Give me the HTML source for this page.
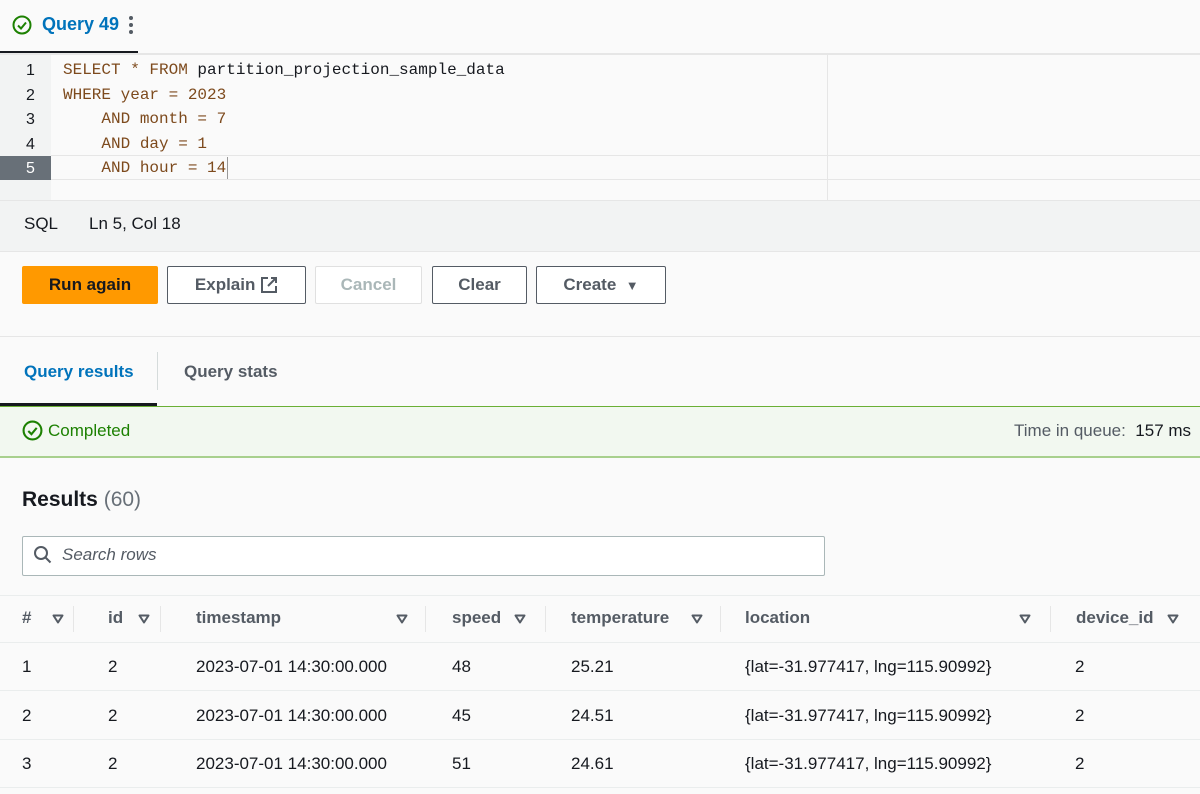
<!DOCTYPE html><html><head><style>
body{margin:0;width:1200px;height:794px;background:#fafafa;font-family:"Liberation Sans",sans-serif;position:relative;overflow:hidden;color:#16191f}
.a{position:absolute;white-space:nowrap}
.mono{font-family:"Liberation Mono",monospace;font-size:16px;color:#7d4a1d}
.btn{position:absolute;top:266px;height:38px;border:1px solid #545b64;border-radius:2px;background:#fff;font-weight:bold;font-size:17px;color:#545b64;display:flex;align-items:center;justify-content:center;box-sizing:border-box}
.th{position:absolute;top:608px;font-weight:bold;font-size:17px;color:#545b64}
.tri{position:absolute;top:614px}
.sep{position:absolute;top:606px;width:1px;height:26px;background:#e6e6e6}
.td{position:absolute;font-size:17px;color:#16191f}
.rl{position:absolute;left:0;width:1200px;height:1px;background:#eaeded}
</style></head><body>
<svg width="0" height="0" style="position:absolute"><defs><symbol id="t" viewBox="0 0 12 10"><path d="M1.5 1.5h9L6 8.5z" fill="none" stroke="#545b64" stroke-width="2" stroke-linejoin="round"/></symbol></defs></svg>
<svg class="a" style="left:12px;top:15px" width="20" height="20" viewBox="0 0 20 20"><circle cx="10" cy="10" r="8.5" fill="none" stroke="#1d8102" stroke-width="2"/><path d="M6 10.5l3 3 5-6" fill="none" stroke="#1d8102" stroke-width="2"/></svg>
<div class="a" style="left:42px;top:14px;font-size:18px;font-weight:bold;color:#0073bb">Query 49</div>
<div class="a" style="left:129px;top:16px;width:4px;height:22px;"><div style="width:4px;height:4px;border-radius:2px;background:#545b64;margin-bottom:3px"></div><div style="width:4px;height:4px;border-radius:2px;background:#545b64;margin-bottom:3px"></div><div style="width:4px;height:4px;border-radius:2px;background:#545b64"></div></div>
<div class="a" style="left:0;top:51px;width:138px;height:3px;background:#16191f"></div>
<div class="a" style="left:0;top:53px;width:1200px;height:2px;background:#e6e6e6"></div>
<div class="a" style="left:0;top:55px;width:51px;height:145px;background:#f2f3f3"></div>
<div class="a" style="left:0;top:156px;width:51px;height:24px;background:#687078"></div>
<div class="a" style="left:51px;top:155px;width:1149px;height:1px;background:#e6e6e6"></div>
<div class="a" style="left:51px;top:179px;width:1149px;height:1px;background:#e6e6e6"></div>
<div class="a" style="left:827px;top:55px;width:1px;height:145px;background:#e6e6e6"></div>
<div class="a" style="left:26px;top:59px;font-size:16px;line-height:24.5px;color:#16191f">1<br>2<br>3<br>4<br><span style="color:#fff">5</span></div>
<div class="a mono" style="left:63px;top:58px;line-height:24.5px">SELECT * FROM <span style="color:#16191f">partition_projection_sample_data</span><br>WHERE year = 2023<br>&nbsp;&nbsp;&nbsp;&nbsp;AND month = 7<br>&nbsp;&nbsp;&nbsp;&nbsp;AND day = 1<br>&nbsp;&nbsp;&nbsp;&nbsp;AND hour = 14</div>
<div class="a" style="left:227px;top:157px;width:1px;height:22px;background:#999"></div>
<div class="a" style="left:0;top:200px;width:1200px;height:50px;background:#f2f3f3;border-top:1px solid #e6e6e6;border-bottom:1px solid #e6e6e6"></div>
<div class="a" style="left:24px;top:214px;font-size:17px">SQL</div>
<div class="a" style="left:89px;top:214px;font-size:17px">Ln 5, Col 18</div>
<div class="btn" style="left:22px;width:136px;background:#ff9900;border-color:#ff9900;color:#16191f">Run again</div>
<div class="btn" style="left:167px;width:139px">Explain&nbsp;<svg width="18" height="18" viewBox="0 0 18 18"><path d="M8 2H2v14h14v-6M11 2h5v5M16 2L8 10" fill="none" stroke="#545b64" stroke-width="2"/></svg></div>
<div class="btn" style="left:315px;width:107px;border-color:#e0e0e0;color:#aab7b8">Cancel</div>
<div class="btn" style="left:432px;width:95px">Clear</div>
<div class="btn" style="left:536px;width:130px">Create&nbsp;&nbsp;<span style="font-size:13px">▼</span></div>
<div class="a" style="left:0;top:336px;width:1200px;height:1px;background:#e6e6e6"></div>
<div class="a" style="left:24px;top:362px;font-size:17px;font-weight:bold;color:#0073bb">Query results</div>
<div class="a" style="left:157px;top:352px;width:1px;height:38px;background:#d5dbdb"></div>
<div class="a" style="left:184px;top:362px;font-size:17px;font-weight:bold;color:#545b64">Query stats</div>
<div class="a" style="left:0;top:403px;width:157px;height:3px;background:#16191f"></div>
<div class="a" style="left:0;top:406px;width:1200px;height:49px;background:#f2f8f0;border-top:1px solid #6aaf35;border-bottom:2px solid #a8d08d"></div>
<svg class="a" style="left:22px;top:420px" width="21" height="21" viewBox="0 0 20 20"><circle cx="10" cy="10" r="8.5" fill="none" stroke="#1d8102" stroke-width="2"/><path d="M6 10.5l3 3 5-6" fill="none" stroke="#1d8102" stroke-width="2"/></svg>
<div class="a" style="left:48px;top:421px;font-size:17px;color:#1d8102">Completed</div>
<div class="a" style="left:1014px;top:421px;font-size:17px;color:#545b64">Time in queue:&nbsp; <span style="color:#16191f">157 ms</span></div>
<div class="a" style="left:22px;top:488px;font-size:21px;font-weight:bold">Results <span style="font-weight:normal;color:#687078">(60)</span></div>
<div class="a" style="left:22px;top:536px;width:801px;height:38px;background:#fff;border:1px solid #aab7b8;border-radius:2px"></div>
<svg class="a" style="left:33px;top:545px" width="20" height="20" viewBox="0 0 20 20"><circle cx="8" cy="8" r="6" fill="none" stroke="#545b64" stroke-width="2"/><path d="M12.5 12.5l5 5" stroke="#545b64" stroke-width="2"/></svg>
<div class="a" style="left:62px;top:545px;font-size:17px;font-style:italic;color:#545b64">Search rows</div>
<div class="rl" style="top:595px"></div>
<div class="th" style="left:22px">#</div><svg class="tri" style="left:52px" width="12" height="10"><use href="#t"/></svg><div class="sep" style="left:73px"></div>
<div class="th" style="left:108px">id</div><svg class="tri" style="left:138px" width="12" height="10"><use href="#t"/></svg><div class="sep" style="left:160px"></div>
<div class="th" style="left:196px">timestamp</div><svg class="tri" style="left:396px" width="12" height="10"><use href="#t"/></svg><div class="sep" style="left:425px"></div>
<div class="th" style="left:452px">speed</div><svg class="tri" style="left:514px" width="12" height="10"><use href="#t"/></svg><div class="sep" style="left:545px"></div>
<div class="th" style="left:571px">temperature</div><svg class="tri" style="left:691px" width="12" height="10"><use href="#t"/></svg><div class="sep" style="left:720px"></div>
<div class="th" style="left:745px">location</div><svg class="tri" style="left:1019px" width="12" height="10"><use href="#t"/></svg><div class="sep" style="left:1050px"></div>
<div class="th" style="left:1076px">device_id</div><svg class="tri" style="left:1167px" width="12" height="10"><use href="#t"/></svg>
<div class="rl" style="top:642px"></div>
<div class="rl" style="top:690px"></div>
<div class="rl" style="top:739px"></div>
<div class="rl" style="top:787px"></div>
<div class="td" style="top:657px;left:22px">1</div><div class="td" style="top:657px;left:108px">2</div><div class="td" style="top:657px;left:196px">2023-07-01 14:30:00.000</div><div class="td" style="top:657px;left:452px">48</div><div class="td" style="top:657px;left:571px">25.21</div><div class="td" style="top:657px;left:745px">{lat=-31.977417, lng=115.90992}</div><div class="td" style="top:657px;left:1075px">2</div>
<div class="td" style="top:706px;left:22px">2</div><div class="td" style="top:706px;left:108px">2</div><div class="td" style="top:706px;left:196px">2023-07-01 14:30:00.000</div><div class="td" style="top:706px;left:452px">45</div><div class="td" style="top:706px;left:571px">24.51</div><div class="td" style="top:706px;left:745px">{lat=-31.977417, lng=115.90992}</div><div class="td" style="top:706px;left:1075px">2</div>
<div class="td" style="top:754px;left:22px">3</div><div class="td" style="top:754px;left:108px">2</div><div class="td" style="top:754px;left:196px">2023-07-01 14:30:00.000</div><div class="td" style="top:754px;left:452px">51</div><div class="td" style="top:754px;left:571px">24.61</div><div class="td" style="top:754px;left:745px">{lat=-31.977417, lng=115.90992}</div><div class="td" style="top:754px;left:1075px">2</div>
</body></html>
